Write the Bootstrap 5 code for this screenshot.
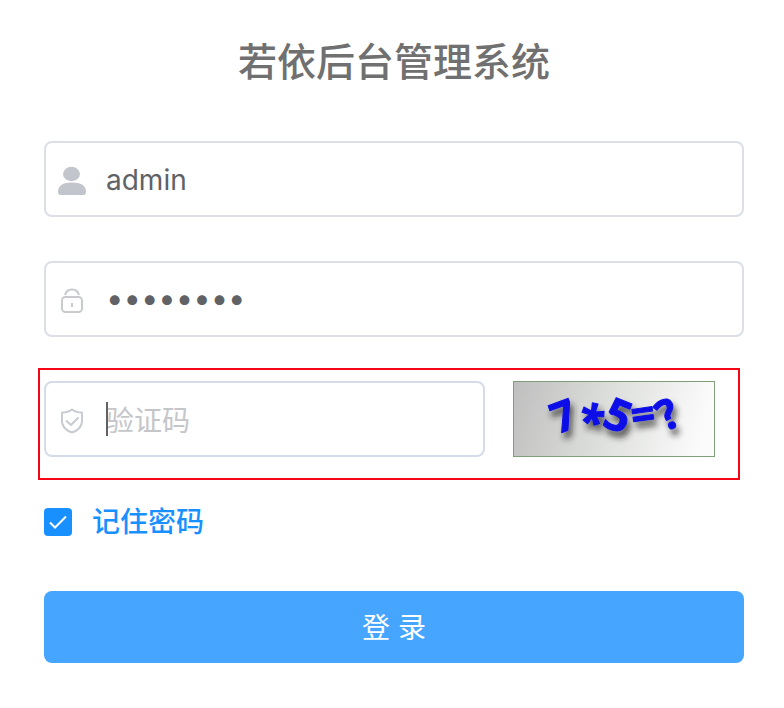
<!DOCTYPE html>
<html lang="zh-CN">
<head>
<meta charset="utf-8">
<meta name="viewport" content="width=device-width, initial-scale=1">
<title>若依后台管理系统</title>
<link href="https://cdn.jsdelivr.net/npm/bootstrap@5.3.0/dist/css/bootstrap.min.css" rel="stylesheet">
<style>
body { font-family: Inter, "Noto Sans CJK SC", sans-serif; background: #fff; color: #606266; }
.login-form { padding: 36px 40px 44px 44px; }
.login-title { font-size: 39px; line-height: 52px; font-weight: 500; color: #707070; margin-bottom: 53px; }
.field { position: relative; margin-bottom: 44px; }
.field .form-control { height: 76px; padding: 2px 28px 0 60px; font-size: 28px; line-height: 40px; border: 2px solid #dcdfe6; border-radius: 8px; color: #606266; box-shadow: none; background: #fff; }
.field .form-control::placeholder { color: #c4c6ca; opacity: 1; }
.field .secret { font-size: 31px; padding-top: 0; padding-bottom: 4px; }
.field-icon { position: absolute; left: 14px; top: 24px; width: 28px; height: 32px; }
.caret-line { position: absolute; left: 62px; top: 21px; width: 2px; height: 34px; background: #606266; }
.code-row { position: relative; gap: 28px; margin-bottom: 47px; }
.code-row .field { flex: 0 0 63%; margin-bottom: 0; }
.code-row .form-control { border-color: #d5dbe8; padding-top: 4px; }
.code-outline { position: absolute; left: -6px; right: 4px; top: -13px; bottom: -23px; border: 2px solid #f50518; pointer-events: none; }
.captcha { width: 202px; height: 76px; overflow: visible; }
.captcha text { font-family: "Noto Sans", sans-serif; font-weight: 700; fill: #0c10e8; }
.remember { gap: 20px; margin-bottom: 51px; }
.remember .form-check-input { width: 28px; height: 28px; margin: 0; border-radius: 4px; border: 0; }
.remember .form-check-input:checked { background-color: #1890ff; background-size: 28px 28px; background-image: url("data:image/svg+xml,%3csvg xmlns='http://www.w3.org/2000/svg' viewBox='0 0 28 28'%3e%3cpath fill='none' stroke='%23fff' stroke-width='2' d='M6 14.500l5 5L22 8.500'/%3e%3c/svg%3e"); }
.remember label { font-size: 28px; line-height: 36px; font-weight: 500; color: #1890ff; }
.btn-login { height: 72px; padding: 2px 0 0; font-size: 28px; line-height: 40px; color: #fff; background: #46a6ff; border: 0; border-radius: 8px; }
.btn-login:hover { color: #fff; background: #66b5ff; }
</style>
</head>
<body>
<main>
<form class="login-form">
  <h1 class="login-title text-center">若依后台管理系统</h1>

  <div class="field">
    <svg class="field-icon" viewBox="0 0 28 32" fill="#c3c5cc" aria-hidden="true"><ellipse cx="13.500" cy="9" rx="8.500" ry="7.200"/><path d="M0 27C0 20.500 5 17.500 14 17.500S28 20.500 28 27Q28 30 25.500 30H2.500Q0 30 0 27Z"/></svg>
    <input class="form-control" type="text" aria-label="账号" value="admin">
  </div>

  <div class="field">
    <svg class="field-icon" viewBox="0 0 28 32" fill="none" stroke="#c8cace" stroke-width="2" aria-hidden="true"><rect x="4" y="12" width="20" height="15" rx="3.500"/><path d="M7 10C9 2.500 19 2.500 21 10M14 18v4"/></svg>
    <input class="form-control secret" type="password" aria-label="密码" value="admin123">
  </div>

  <div class="code-row d-flex">
    <div class="field">
      <svg class="field-icon" viewBox="0 0 28 32" fill="none" stroke="#c8cbd1" stroke-width="2" stroke-linejoin="round" aria-hidden="true"><path d="M14 4.500Q18 7.500 24 7.500V17Q23 24.500 14 27.500Q5 24.500 4 17V7.500Q10 7.500 14 4.500Z"/><path d="M8 15.500l5 4.500 7.500-7.500"/></svg>
      <input class="form-control" type="text" aria-label="验证码" placeholder="验证码">
      <span class="caret-line"></span>
    </div>
    <svg class="captcha" viewBox="0 0 202 76" role="img" aria-label="验证码图片">
      <defs>
        <linearGradient id="paper" x2="1" y2=".1"><stop offset="0" stop-color="#bebfbe"/><stop offset=".55" stop-color="#e0e2df"/><stop offset="1" stop-color="#fbfbfb"/></linearGradient>
        <filter id="cast" filterUnits="userSpaceOnUse" x="0" y="0" width="202" height="76"><feDropShadow dx="3" dy="6" stdDeviation="3" flood-color="#222" flood-opacity=".75"/></filter>
      </defs>
      <rect x=".5" y=".5" width="201" height="75" fill="url(#paper)" stroke="#7f9f78"/>
      <g filter="url(#cast)" stroke="#0c10e8" stroke-linejoin="round" text-anchor="middle">
        <text x="50" y="50" font-size="42" transform="rotate(-20 50 34)">7</text>
        <text x="79" y="57" font-size="46" transform="rotate(12 79 37)">*</text>
        <text x="105" y="50" font-size="44" transform="rotate(22 105 35)">5</text>
        <text x="130" y="48" font-size="42" transform="rotate(-8 130 35)">=</text>
        <text x="155" y="48" font-size="42" transform="rotate(-28 155 34)">?</text>
      </g>
    </svg>
    <span class="code-outline"></span>
  </div>

  <div class="remember d-flex align-items-center">
    <input class="form-check-input" type="checkbox" id="remember" checked>
    <label for="remember">记住密码</label>
  </div>

  <button class="btn btn-login w-100" type="submit">登 录</button>
</form>
</main>
<script src="https://cdn.jsdelivr.net/npm/bootstrap@5.3.0/dist/js/bootstrap.bundle.min.js"></script>
</body>
</html>
